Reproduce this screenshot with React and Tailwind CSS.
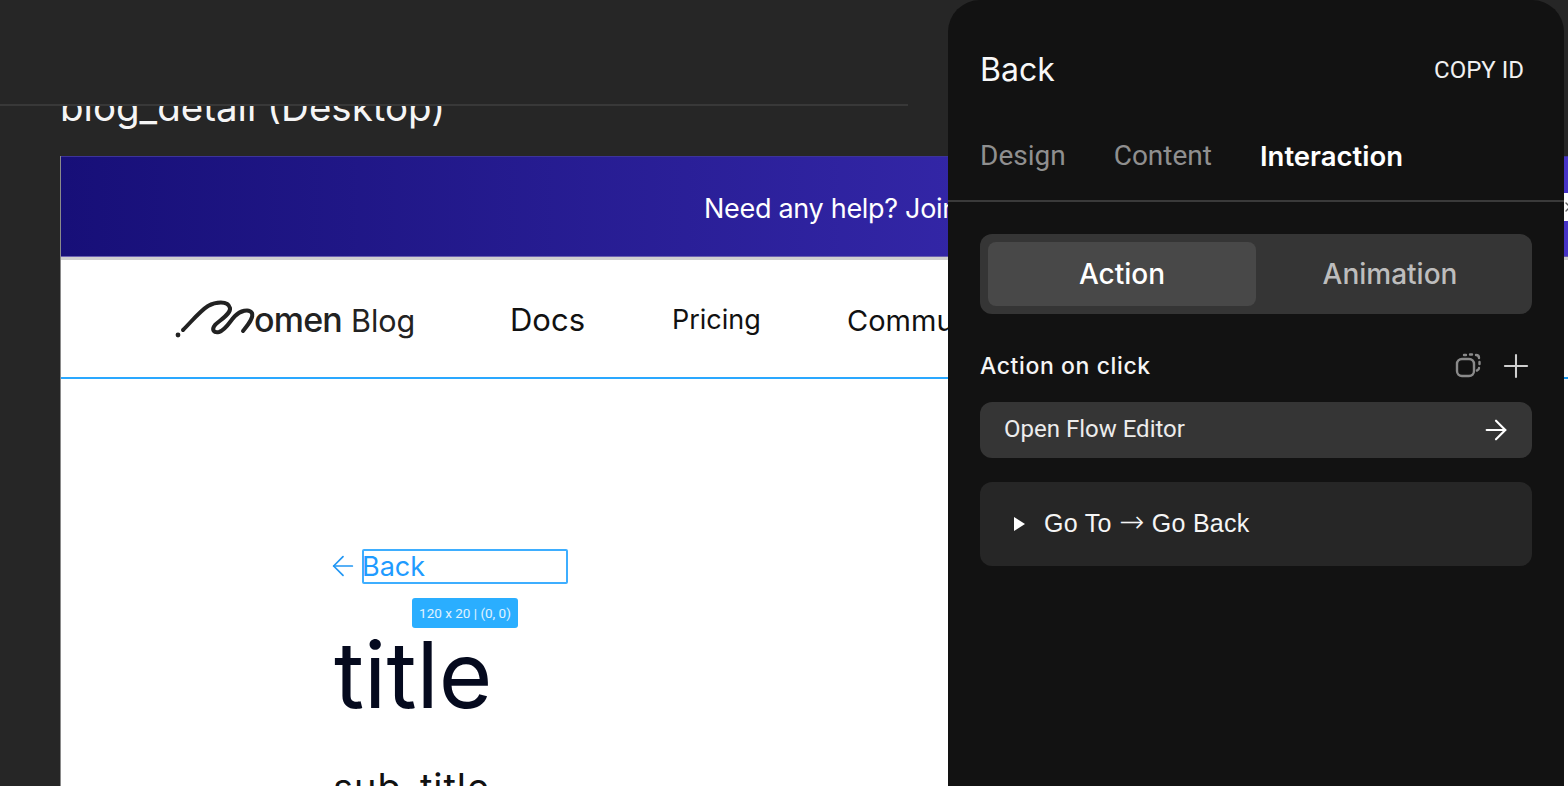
import { ArrowLeft, ArrowRight, Plus, X } from 'lucide-react';

const INTER = 'font-["Inter",sans-serif]';
const ROBOTO = "font-['Roboto',sans-serif]";

function LogoMark() {
  return (
    <svg width="85" height="40" viewBox="0 0 85 40" fill="none" className="shrink-0">
      <circle cx="3" cy="36" r="2.400" fill="#222" />
      <path d="M8 31C17 22 25 12 33 7C40 3 53 1 55 9C56 15 45 21 40 26C36 31 39 34 44 33C51 31 55 22 60 17C65 12 74 9 77 14C79 19 72 27 68 32" stroke="#222" strokeWidth="4" strokeLinecap="round" />
    </svg>
  );
}

function CanvasArea() {
  return (
    <div className="h-full flex flex-col overflow-hidden">
      {/* Top bar */}
      <div className="h-[106px] shrink-0 w-[908px] border-b-2 border-[#383838]" />

      <div className="flex-1 overflow-hidden pl-[60px]">
        <h2 className={`${INTER} -mt-[22px] text-[38.500px] leading-[46px] text-[#f5f5f5] whitespace-nowrap`}>
          blog_detail (Desktop)
        </h2>

        {/* Frame */}
        <div className="mt-[26px] w-[1600px] bg-white border-l border-[#8a8a8a]">
          <div className="h-[100px] border-t border-[#3d3399] bg-gradient-to-r from-[#170f78] to-[#4a37cc] pl-[643px] pr-[76px] pt-[6px] flex items-center justify-between">
            <span className={`${INTER} text-[27px] text-white tracking-[-0.3px] whitespace-nowrap`}>Need any help? Join our community</span>
            <span className="-mt-[6px] w-[28px] h-[28px] bg-white flex items-center justify-center text-[#666]"><X size={16} /></span>
          </div>
          <div className="h-[4px] border-t border-[#6a5fb0] bg-[#cfcfcf]" />

          {/* Nav */}
          <div className="h-[119px] pl-[114px] flex items-center border-b-2 border-[#2aa8ff]">
            <div className="flex items-center w-[335px]">
              <LogoMark />
              <span className={`${INTER} -ml-[6px] mt-[2px] text-[34px] leading-none font-medium tracking-[-0.8px] text-[#222]`}>omen</span>
              <span className={`${INTER} ml-[9px] mt-[6px] text-[30.500px] leading-none text-[#222]`}>Blog</span>
            </div>
            <div className={`${INTER} mt-[4px] flex items-center text-[#111] whitespace-nowrap`}>
              <span className="text-[31px] w-[162px]">Docs</span>
              <span className="text-[27px] w-[175px]">Pricing</span>
              <span className="text-[29px]">Community</span>
            </div>
          </div>

          {/* Page */}
          <div className="pl-[272px] pt-[170px]">
            <div className="flex items-center h-[34px]">
              <div className="w-[29px] shrink-0 flex">
                <ArrowLeft size={32} strokeWidth={1.3} className="text-[#2196f3] -ml-[6px] shrink-0" />
              </div>
              <div className={`${INTER} w-[206px] h-[35px] border-2 border-[#3eaeff] rounded-[2px] text-[27px] leading-[31px] text-[#1f9bff]`}>
                <span className="-ml-[2px]">Back</span>
              </div>
            </div>
            <div className="relative h-0">
              <div className={`${ROBOTO} absolute left-[79px] top-[15px] w-[106px] h-[30px] rounded-[3px] bg-[#2aaeff] flex items-center justify-center text-[13.500px] text-white/85 whitespace-nowrap`}>
                120 x 20 | (0, 0)
              </div>
            </div>
            <h1 className={`${INTER} ml-[1px] mt-[39px] text-[92px] leading-[106px] text-[#050a1e]`}>title</h1>
            <p className={`${INTER} mt-[37px] text-[38px] leading-[44px] text-[#111] tracking-wide`}>sub_title</p>
          </div>
        </div>
      </div>
    </div>
  );
}

function SidePanel() {
  return (
    <aside className="absolute left-[948px] top-0 w-[616px] h-full rounded-t-[32px] bg-[#121212] text-white">
      <div className="h-[139px] pl-[32px] pr-[40px] flex justify-between items-center">
        <span className={`${INTER} text-[32px] leading-none text-[#f8f8f8]`}>Back</span>
        <span className={`${ROBOTO} text-[24px] leading-none text-[#f0f0f0]`}>COPY ID</span>
      </div>

      {/* Tabs */}
      <div className={`${ROBOTO} h-[63px] pl-[32px] flex gap-[48px] border-b-2 border-[#3a3a3a] text-[28px] leading-[34px]`}>
        <span className="text-[#8f8f8f]">Design</span>
        <span className="text-[#8f8f8f]">Content</span>
        <span className={`${INTER} text-[27.500px] font-semibold text-white`}>Interaction</span>
      </div>

      <div className="px-[32px] pt-[32px]">
        <div className={`${INTER} h-[80px] p-[8px] rounded-[12px] bg-[#353535] flex font-medium text-[28px]`}>
          <div className="w-[268px] rounded-[8px] bg-[#484848] flex items-center justify-center text-white">Action</div>
          <div className="flex-1 flex items-center justify-center text-[#bdbdbd]">Animation</div>
        </div>

        <div className="mt-[28px] h-[48px] flex items-center justify-between">
          <span className={`${INTER} text-[23px] font-medium tracking-[0.6px] text-[#f5f5f5]`}>Action on click</span>
          <div className="flex items-center gap-[14px] text-[#cfcfcf] -mr-[3px]">
            <svg width="28" height="28" viewBox="0 0 28 28" fill="none" stroke="currentColor" strokeWidth="2.400" className="text-[#8a8a8a]">
              <rect x="2" y="7" width="17" height="17" rx="5" />
              <path d="M9 3h2M15 2.500h2M21 3c2 0 3 1 3 3M24.500 10v2M24 16c0 1-.5 2-2 2.500" strokeLinecap="round" />
            </svg>
            <Plus size={38} strokeWidth={1.3} />
          </div>
        </div>

        <div className="mt-[12px] h-[56px] pl-[24px] pr-[20px] rounded-[12px] bg-[#353535] flex items-center justify-between">
          <span className={`${ROBOTO} -mt-[2px] text-[24px] text-[#ececec]`}>Open Flow Editor</span>
          <ArrowRight size={32} strokeWidth={1.6} />
        </div>

        <div className="mt-[24px] h-[84px] pl-[34px] rounded-[12px] bg-[#262626] flex items-center gap-[19px]">
          <span className="w-0 h-0 border-y-[7px] border-y-transparent border-l-[11px] border-l-white" />
          <span className="-mt-[4px] font-['Liberation_Sans',sans-serif] text-[25px] leading-none tracking-[0.3px] text-[#f5f5f5] whitespace-nowrap">
            Go To <span className="font-['DejaVu_Sans',sans-serif] font-light text-[30px] leading-none">→</span> Go Back
          </span>
        </div>
      </div>
    </aside>
  );
}

export default function App() {
  return (
    <div className="relative h-[786px] w-[1568px] overflow-hidden bg-[#262626]">
      <CanvasArea />
      <SidePanel />
    </div>
  );
}
